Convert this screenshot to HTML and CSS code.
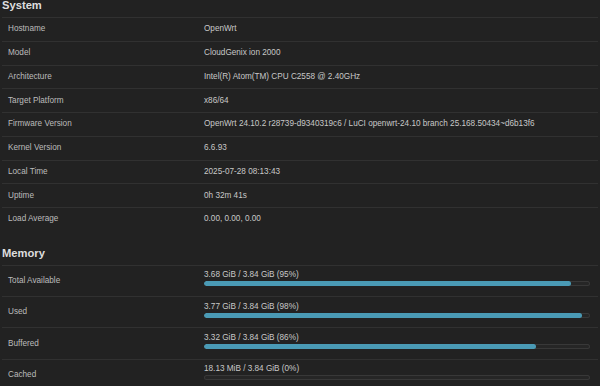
FILE: index.html
```html
<!DOCTYPE html>
<html lang="en">
<head>
<meta charset="UTF-8" />
<meta name="viewport" content="width=device-width, initial-scale=1.0"/>
<title>Status - Overview</title>
<link rel="stylesheet" href="styles.css">
</head>
<body>
<div id="main">
<h3 class="section-title first">System</h3>
<div class="table">
    <div class="tr"><div class="td label">Hostname</div><div class="td">OpenWrt</div></div>
    <div class="tr"><div class="td label">Model</div><div class="td">CloudGenix ion 2000</div></div>
    <div class="tr"><div class="td label">Architecture</div><div class="td">Intel(R) Atom(TM) CPU C2558 @ 2.40GHz</div></div>
    <div class="tr"><div class="td label">Target Platform</div><div class="td">x86/64</div></div>
    <div class="tr"><div class="td label">Firmware Version</div><div class="td">OpenWrt 24.10.2 r28739-d9340319c6 / LuCI openwrt-24.10 branch 25.168.50434~d6b13f6</div></div>
    <div class="tr"><div class="td label">Kernel Version</div><div class="td">6.6.93</div></div>
    <div class="tr"><div class="td label">Local Time</div><div class="td">2025-07-28 08:13:43</div></div>
    <div class="tr"><div class="td label">Uptime</div><div class="td">0h 32m 41s</div></div>
    <div class="tr"><div class="td label">Load Average</div><div class="td">0.00, 0.00, 0.00</div></div>
</div>

<h3 class="section-title">Memory</h3>
<div class="table mem">
    <div class="tr"><div class="td label">Total Available</div><div class="td value">
        <div class="bar-text">3.68 GiB / 3.84 GiB (95%)</div>
        <div class="bar"><div class="fill" style="width: 95%"></div></div>
    </div></div>
    <div class="tr"><div class="td label">Used</div><div class="td value">
        <div class="bar-text">3.77 GiB / 3.84 GiB (98%)</div>
        <div class="bar"><div class="fill" style="width: 98%"></div></div>
    </div></div>
    <div class="tr"><div class="td label">Buffered</div><div class="td value">
        <div class="bar-text">3.32 GiB / 3.84 GiB (86%)</div>
        <div class="bar"><div class="fill" style="width: 86%"></div></div>
    </div></div>
    <div class="tr"><div class="td label">Cached</div><div class="td value">
        <div class="bar-text">18.13 MiB / 3.84 GiB (0%)</div>
        <div class="bar"><div class="fill" style="width: 0%"></div></div>
    </div></div>
</div>
</div>
</body>
</html>
```

FILE: styles.css
```css
body {
    margin: 0;
    background-color: #222222;
    color: #c8c8c8;
    font-family: "Liberation Sans", Arial, sans-serif;
    font-size: 8.2px;
    overflow: hidden;
}
#main {
    padding: 0 2px;
}
.section-title {
    margin: 15px 0 0 0;
    padding: 0 0 5px 0;
    font-size: 11.2px;
    line-height: 14px;
    font-weight: bold;
    color: #dedede;
}
.section-title.first {
    margin-top: -2px;
}
.tr {
    display: grid;
    grid-template-columns: 202px 1fr;
    align-items: center;
    box-sizing: border-box;
    height: 23.75px;
    border-top: 1px solid #313131;
}
.mem .tr {
    height: 31.33px;
}
.td {
    line-height: 10px;
    padding-right: 8px;
    white-space: nowrap;
}
.td.label {
    padding-left: 6px;
    color: #bcbcbc;
}
.td.value {
    margin-bottom: 5px;
}
.bar-text {
    line-height: 10px;
}
.bar {
    margin-top: 1px;
    height: 5px;
    border-radius: 3px;
    background-color: #262626;
    box-shadow: inset 0 0 0 1px #383838;
    overflow: hidden;
}
.fill {
    height: 100%;
    border-radius: 3px;
    background-color: #4a9ab5;
}
```
